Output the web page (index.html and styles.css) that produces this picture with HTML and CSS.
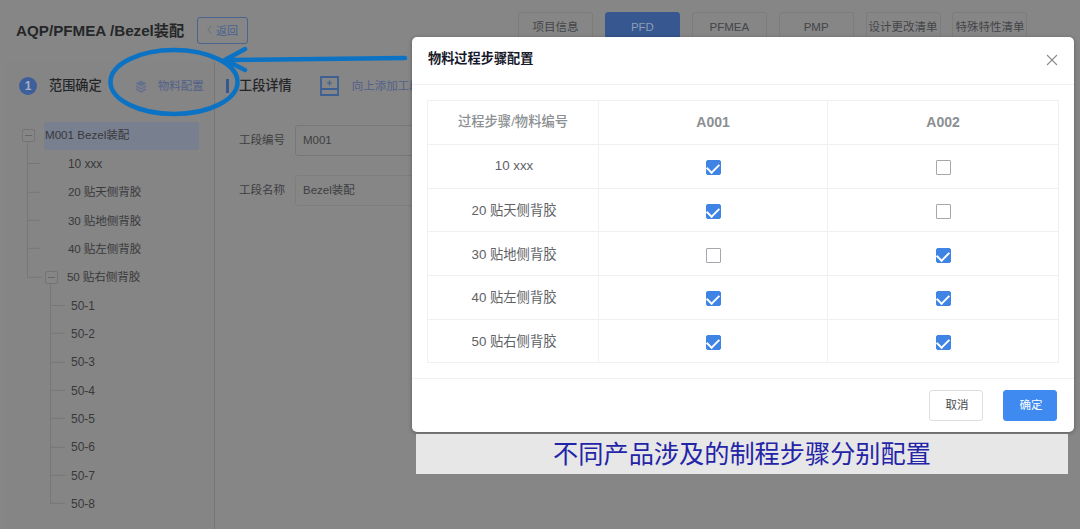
FILE: index.html
```
<!DOCTYPE html>
<html lang="zh-CN">
  <head>
    <meta charset="UTF-8">
    <meta name="viewport" content="width=device-width, initial-scale=1.0">
    <title>AQP/PFMEA /Bezel装配</title>
    <link rel="stylesheet" href="styles.css">
  </head>
<body>
  <div class="page">
    <header class="header">
      <h1>AQP/PFMEA /Bezel装配</h1>
      <button class="back">
        <svg width="5" height="9" viewBox="0 0 5 9"><path d="M4 1L1 4.5L4 8" fill="none" stroke="#666c78"/></svg>
        <span>返回</span>
      </button>
      <nav class="tabs">
        <a class="tab">项目信息</a>
        <a class="tab active">PFD</a>
        <a class="tab">PFMEA</a>
        <a class="tab">PMP</a>
        <a class="tab">设计更改清单</a>
        <a class="tab">特殊特性清单</a>
      </nav>
    </header>

    <main class="main">
      <aside class="side">
        <div class="side-head">
          <span class="step">1</span>
          <h2>范围确定</h2>
          <svg class="layers" width="12" height="13" viewBox="0 0 12 13">
            <path d="M6 0.5L11.5 3.5L6 6.5L0.5 3.5Z" fill="#65708c"/>
            <path d="M1 6L6 9L11 6M1 9L6 12L11 9" fill="none" stroke="#65708c" stroke-width="1.5"/>
          </svg>
          <a class="link">物料配置</a>
        </div>
        <div class="tree">
          <div class="row root"><i class="toggle"></i><span class="selected">M001 Bezel装配</span></div>
          <div class="row first"><i class="twig"></i><span class="text">10 xxx</span></div>
          <div class="row"><i class="twig"></i><span class="text">20 贴天侧背胶</span></div>
          <div class="row"><i class="twig"></i><span class="text">30 贴地侧背胶</span></div>
          <div class="row"><i class="twig"></i><span class="text">40 贴左侧背胶</span></div>
          <div class="row parent"><i class="twig"></i><i class="toggle"></i><span class="text">50 贴右侧背胶</span></div>
          <div class="row leaf first"><i class="twig"></i><span>50-1</span></div>
          <div class="row leaf"><i class="twig"></i><span>50-2</span></div>
          <div class="row leaf"><i class="twig"></i><span>50-3</span></div>
          <div class="row leaf"><i class="twig"></i><span>50-4</span></div>
          <div class="row leaf"><i class="twig"></i><span>50-5</span></div>
          <div class="row leaf"><i class="twig"></i><span>50-6</span></div>
          <div class="row leaf"><i class="twig"></i><span>50-7</span></div>
          <div class="row leaf"><i class="twig"></i><span>50-8</span></div>
        </div>
      </aside>

      <section class="detail">
        <div class="detail-head">
          <i class="bar"></i>
          <h2>工段详情</h2>
          <svg width="19" height="20" viewBox="0 0 19 20">
            <path d="M1 1H18V19H1ZM1 13H18" fill="none" stroke="#3d5f92" stroke-width="1.8"/>
            <path d="M9.5 4.5V9.5M7 7H12" stroke="#3d5f92" stroke-width="1.2"/>
          </svg>
          <a class="link">向上添加工段</a>
        </div>
        <div class="field"><label>工段编号</label><div class="input">M001</div></div>
        <div class="field"><label>工段名称</label><div class="input light">Bezel装配</div></div>
      </section>
    </main>
  </div>

  <div class="dialog">
    <div class="dialog-head">
      <h3>物料过程步骤配置</h3>
      <svg width="12" height="12" viewBox="0 0 12 12"><path d="M1 1L11 11M11 1L1 11" stroke="#8c8c8c" stroke-width="1.1"/></svg>
    </div>
    <div class="dialog-body">
      <div class="table">
        <div class="cell th name">过程步骤/物料编号</div><div class="cell th">A001</div><div class="cell th">A002</div>
        <div class="cell label">10 xxx</div><div class="cell"><i class="check on"></i></div><div class="cell"><i class="check"></i></div>
        <div class="cell label">20 贴天侧背胶</div><div class="cell"><i class="check on"></i></div><div class="cell"><i class="check"></i></div>
        <div class="cell label">30 贴地侧背胶</div><div class="cell"><i class="check"></i></div><div class="cell"><i class="check on"></i></div>
        <div class="cell label">40 贴左侧背胶</div><div class="cell"><i class="check on"></i></div><div class="cell"><i class="check on"></i></div>
        <div class="cell label">50 贴右侧背胶</div><div class="cell"><i class="check on"></i></div><div class="cell"><i class="check on"></i></div>
      </div>
    </div>
    <div class="dialog-foot">
      <button class="btn">取消</button>
      <button class="btn primary">确定</button>
    </div>
  </div>

  <div class="caption">不同产品涉及的制程步骤分别配置</div>

  <svg class="marker" width="420" height="130" viewBox="0 0 420 130">
    <g fill="none" stroke="#0c73c4" stroke-width="4.5" stroke-linecap="round">
      <ellipse cx="174" cy="82" rx="63.5" ry="32"/>
      <path d="M405 58L228 60M245 49L225 60L245 70"/>
    </g>
  </svg>
</body>
</html>
```
FILE: styles.css
```
* {
  box-sizing: border-box;
}

body {
  margin: 0;
  height: 529px;
  overflow: hidden;
  background: #868686;
  color: #3d3e41;
  font-family: "Liberation Sans", "Noto Sans CJK SC", sans-serif;
  font-size: 12px;
}

h1, h2, h3 {
  margin: 0;
  white-space: nowrap;
}

button {
  font-family: inherit;
}

.header {
  display: flex;
  height: 62px;
  padding-left: 16px;
}

.header h1 {
  width: 181px;
  padding-top: 20px;
  font-size: 15.2px;
  line-height: 22px;
  color: #252628;
}

.back {
  display: flex;
  align-items: center;
  justify-content: center;
  gap: 4px;
  width: 51px;
  height: 27px;
  margin-top: 17px;
  padding: 0 0 2px;
  border: 1px solid #48648f;
  border-radius: 3px;
  background: none;
  color: #48648f;
  font-size: 11px;
}

.tabs {
  display: flex;
  gap: 11.9px;
  margin: 12px 0 0 270px;
}

.tab {
  width: 75px;
  height: 30px;
  border: 1px solid #7b7c7e;
  border-radius: 3px;
  line-height: 28px;
  font-size: 11.5px;
  text-align: center;
  white-space: nowrap;
  color: #444548;
}

.tab.active {
  border-color: #36578f;
  background: #36578f;
  color: #8d9cb8;
}

.main {
  display: flex;
  height: 467px;
}

.side {
  width: 210px;
  margin-left: 5px;
  border-right: 1px solid #757575;
  background: #858585;
}

.side-head, .detail-head {
  display: flex;
  align-items: center;
  height: 48px;
}

.side-head {
  padding-left: 14px;
}

h2 {
  padding-bottom: 3px;
  font-size: 13.2px;
  font-weight: 500;
  color: #242527;
}

.step {
  width: 18px;
  height: 18px;
  margin-right: 12px;
  border-radius: 50%;
  background: #3d5f9b;
  color: #a5afc4;
  font-weight: bold;
  line-height: 18px;
  text-align: center;
}

.layers {
  margin: 0 11px 0 33px;
}

.link {
  padding-bottom: 3px;
  font-size: 11.5px;
  color: #52618a;
  white-space: nowrap;
}

.tree {
  padding: 11.5px 0 0 17px;
}

.row {
  display: flex;
  align-items: center;
  height: 28.35px;
  padding-left: 5px;
  color: #38393b;
}

.row.root {
  padding-left: 0;
}

.text {
  padding-bottom: 2px;
  font-size: 11.6px;
  letter-spacing: -0.1px;
}

.row.first .text {
  padding-bottom: 0;
  font-size: 12px;
}

.toggle {
  display: flex;
  align-items: center;
  justify-content: center;
  width: 13px;
  height: 13px;
  margin-right: 9px;
  border: 1px solid #747474;
  border-radius: 2px;
  background: #868686;
}

.toggle::before {
  content: "";
  width: 7px;
  height: 1px;
  background: #666;
}

.selected {
  width: 155px;
  height: 28px;
  line-height: 26px;
  padding-left: 1px;
  border-radius: 2px;
  background: #78808f;
  font-size: 11.6px;
}

/* joins the middle of the previous row to the middle of this one */
.twig {
  width: 13px;
  height: 28.35px;
  margin-right: 28px;
  border-left: 1px solid #777;
  border-bottom: 1px solid #777;
  transform: translateY(-50%);
}

.row.first .twig {
  height: 22px;
}

.row.parent .twig {
  width: 15px;
  margin-right: 3px;
}

.row.leaf {
  padding-left: 28px;
}

.row.leaf .twig {
  width: 15px;
  margin-right: 6px;
}

.detail {
  width: 760px;
  padding-left: 11px;
}

.detail-head {
  margin-bottom: 15px;
}

.bar {
  width: 3px;
  height: 14px;
  margin-right: 10px;
  background: #36578f;
}

.detail-head svg {
  margin: 0 13px 0 28px;
}

.field {
  display: flex;
  align-items: center;
  height: 31px;
  margin-bottom: 19px;
}

.field label {
  width: 69px;
  padding: 0 0 3px 13px;
  font-size: 11.5px;
  white-space: nowrap;
}

.input {
  flex: 1;
  height: 31px;
  padding-left: 7px;
  border: 1px solid #777;
  border-radius: 3px;
  line-height: 28px;
  font-size: 11.5px;
}

.input.light {
  border-color: #7e7e7e;
}

.dialog {
  position: absolute;
  left: 412px;
  top: 37px;
  width: 662px;
  height: 395px;
  border-radius: 5px;
  background: #fff;
  box-shadow: 0 1px 4px rgba(0, 0, 0, 0.3);
}

.dialog-head {
  display: flex;
  align-items: center;
  justify-content: space-between;
  height: 48px;
  padding: 0 16px;
  border-bottom: 1px solid #f0f0f0;
}

.dialog-head svg {
  margin-top: -2px;
}

.dialog-head h3 {
  padding-bottom: 7px;
  font-size: 13.2px;
  font-weight: 600;
  color: #17192b;
}

.dialog-body {
  height: 294px;
  padding: 15px 15px 0 15px;
  border-bottom: 1px solid #f0f0f0;
}

.table {
  display: grid;
  grid-template-columns: 171px 229px 231px;
  grid-template-rows: 44px repeat(5, 43.7px);
  width: 632px;
  border-top: 1px solid #eff0f1;
  border-left: 1px solid #eff0f1;
}

.cell {
  display: flex;
  align-items: center;
  justify-content: center;
  padding-top: 3px;
  border-right: 1px solid #eff0f1;
  border-bottom: 1px solid #eff0f1;
  font-size: 13.3px;
  color: #606266;
}

.cell.label {
  padding: 0 0 1px 2px;
}

.cell.th {
  padding: 0 0 1px;
  font-size: 14px;
  font-weight: bold;
  color: #8c9092;
}

.cell.name {
  padding-bottom: 4px;
  font-size: 13.3px;
  font-weight: 500;
}

.check {
  width: 15px;
  height: 15px;
  border: 1px solid #a4a7ab;
  border-radius: 1px;
}

.check.on {
  display: flex;
  justify-content: center;
  border-color: #3f83e4;
  border-radius: 2px;
  background: #3f83e4;
}

.check.on::before {
  content: "";
  width: 6px;
  height: 10px;
  border: solid #fff;
  border-width: 0 2px 2px 0;
  transform: rotate(45deg);
}

.dialog-foot {
  display: flex;
  justify-content: flex-end;
  gap: 20px;
  padding: 11px 17px 0;
}

.btn {
  width: 54px;
  height: 31px;
  padding: 0 0 3px 2px;
  border: 1px solid #dcdee2;
  border-radius: 3px;
  background: #fff;
  color: #46484c;
  font-size: 11.5px;
}

.btn.primary {
  border-color: #3e8af0;
  background: #3e8af0;
  color: #fff;
}

.caption {
  position: absolute;
  left: 416px;
  top: 434px;
  width: 652px;
  height: 40px;
  background: #e7e7e7;
  color: #2424a8;
  font-size: 25.2px;
  line-height: 40px;
  text-align: center;
}

.marker {
  position: absolute;
  left: 0;
  top: 0;
}
```
